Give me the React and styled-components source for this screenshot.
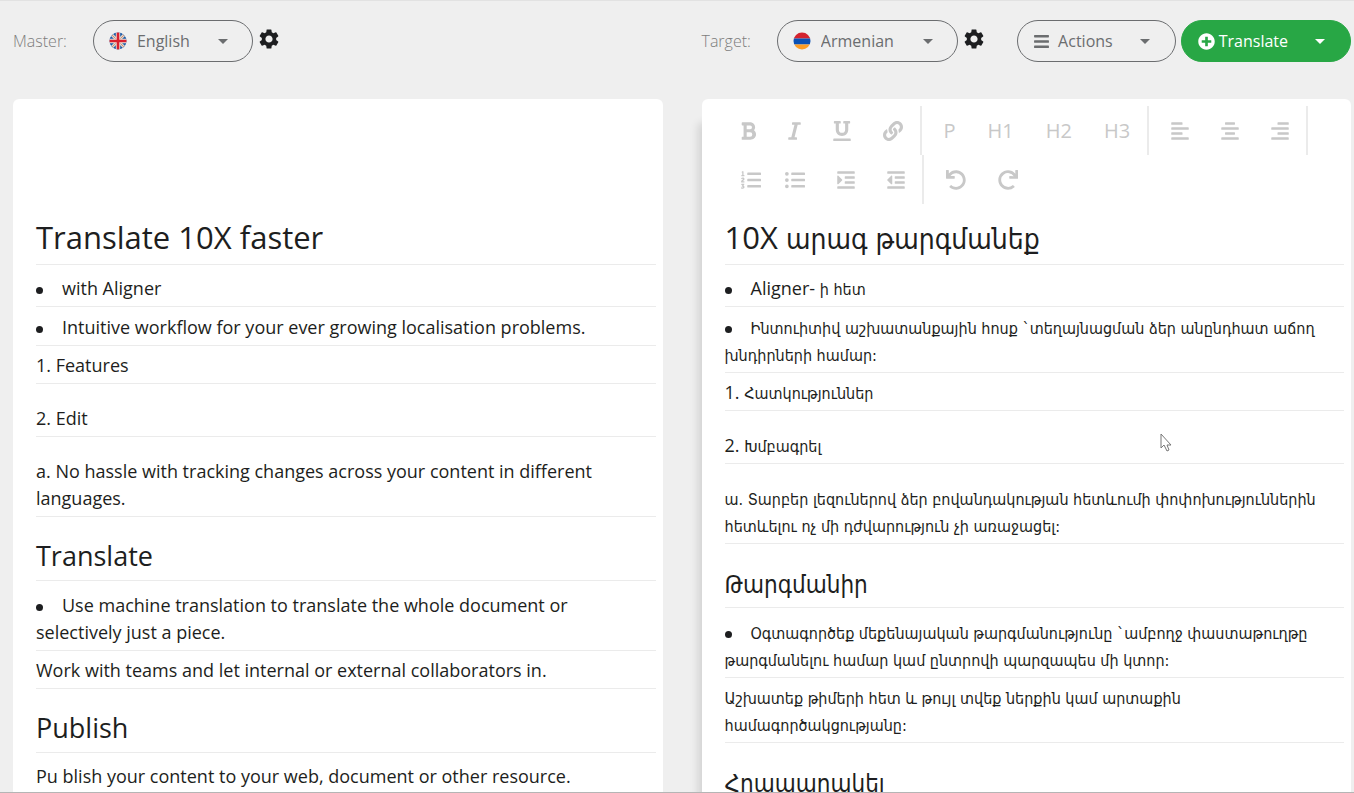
import React from 'react';
import styled, { createGlobalStyle } from 'styled-components';
import {
  FaBold, FaItalic, FaUnderline, FaLink, FaAlignLeft, FaAlignCenter, FaAlignRight,
  FaListOl, FaListUl, FaIndent, FaOutdent, FaUndo, FaRedo, FaBars, FaPlusCircle,
} from 'react-icons/fa';
import { MdSettings } from 'react-icons/md';

const GlobalStyle = createGlobalStyle`
  * { box-sizing: border-box; }
  body {
    margin: 0;
    background: #efefef;
    color: #1d1e20;
    font-family: 'Open Sans', 'DejaVu Sans Condensed', 'DejaVu Sans', sans-serif;
    font-size: 18px;
    line-height: 27px;
  }
`;

const Page = styled.div`
  height: 100vh;
  display: flex;
  flex-direction: column;
  overflow: hidden;
  border-top: 1px solid #e2e2e2;
  border-bottom: 1px solid #b5b5b5;
`;

const Columns = styled.div`
  display: grid;
  grid-template-columns: minmax(0, 1fr) minmax(0, 1fr);
  column-gap: 39px;
  padding: 0 3px 0 13px;
`;

const TopBar = styled(Columns).attrs({ as: 'header' })`
  padding-top: 19px;
  padding-bottom: 37px;
`;

const Workspace = styled(Columns).attrs({ as: 'main' })`
  flex: 1;
  min-height: 0;
  grid-template-rows: minmax(0, 1fr);
`;

const Side = styled.div`
  display: flex;
  align-items: center;
`;

const FieldLabel = styled.label`
  margin-right: 26px;
  font-size: 16px;
  font-weight: 300;
  color: #7d7d7d;
`;

const Picker = styled.div`
  display: flex;
  align-items: center;
  height: 42px;
  padding: 0 24px 0 15px;
  border: 1px solid #6b6d6f;
  border-radius: 21px;
  color: #6b6d6f;
`;

const Select = styled.select`
  appearance: none;
  margin: 0 28px 0 10px;
  padding: 0;
  border: 0;
  background: transparent;
  color: inherit;
  font: inherit;
  font-size: 16px;
`;

const Caret = styled.span`
  border: 5px solid transparent;
  border-top-color: currentColor;
  border-bottom: 0;
`;

const Flag = styled.svg`
  width: 18px;
  height: 18px;
`;

const GearButton = styled.button`
  display: flex;
  margin: 0 0 4px 4px;
  padding: 0;
  border: 0;
  background: none;
  color: #1d1e20;
  font-size: 24px;
`;

const Spacer = styled.div`
  flex: 1;
`;

const MenuButton = styled.button`
  display: flex;
  align-items: center;
  gap: ${(p) => (p.$primary ? 4 : 8)}px;
  height: 42px;
  margin-left: ${(p) => (p.$primary ? 5 : 0)}px;
  padding: 0 25px 0 ${(p) => (p.$primary ? 16 : 15)}px;
  border: 1px solid ${(p) => (p.$primary ? '#28a745' : '#6b6d6f')};
  border-radius: 21px;
  background: ${(p) => (p.$primary ? '#28a745' : 'transparent')};
  color: ${(p) => (p.$primary ? '#fff' : '#6b6d6f')};
  font: inherit;
  font-size: 16px;

  svg {
    width: 17px;
    height: 17px;
  }

  ${Caret} {
    margin-left: ${(p) => (p.$primary ? 23 : 19)}px;
  }
`;

const Panel = styled.section`
  padding: 7px 7px 0 23px;
  overflow-y: auto;
  scrollbar-width: none;
  border-radius: 6px 6px 0 0;
  background: #fff;
  box-shadow: ${(p) => (p.$raised ? '-6px 22px 8px -2px rgba(0, 0, 0, 0.12)' : 'none')};
`;

const Toolbar = styled.div`
  display: flex;
  flex-wrap: wrap;
  min-height: 98px;
`;

const ToolGroup = styled.div`
  display: flex;
  height: 49px;
  padding-right: 1px;
  padding-left: ${(p) => (p.$inset ? 6 : 0)}px;
  border-right: ${(p) => (p.$last ? 0 : 2)}px solid #ebebeb;
`;

const Tool = styled.button`
  display: flex;
  align-items: center;
  padding: 0 ${(p) => (p.$tight ? 8 : 16)}px 0 16px;
  border: 0;
  background: none;
  color: #c8c8c8;
  font: inherit;
  font-size: 20px;

  svg {
    width: ${(p) => p.$glyph}px;
    height: 20px;
  }
`;

const Title = styled.h1`
  margin: 0 0 3px;
  padding: 13px 0 7px;
  border-bottom: 1px solid #ebebeb;
  font-size: 31px;
  font-weight: 400;
  line-height: 40px;
`;

const Heading = styled.h2`
  margin: 0 0 4px;
  padding: 19px 0 5px;
  border-bottom: 1px solid #ebebeb;
  font-size: 27px;
  font-weight: 400;
  line-height: 39px;
`;

const Paragraph = styled.p`
  margin: ${(p) => (p.$spaced ? 15 : 0)}px 0 0;
  padding: 6px 0 4px;
  border-bottom: 1px solid #ebebeb;
`;

const Bullets = styled.ul`
  margin: 0;
  padding: 0;
  list-style: none;
`;

const Item = styled.li`
  padding: 7px 0 4px;
  border-bottom: 1px solid #ebebeb;

  &::before {
    content: '';
    display: inline-block;
    width: 7px;
    height: 7px;
    margin-right: 19px;
    border-radius: 50%;
    background: currentColor;
    vertical-align: middle;
  }
`;

const Armenian = styled.span.attrs({ lang: 'hy' })`
  font-family: 'DejaVu Sans Condensed', 'DejaVu Sans', sans-serif;
  font-size: ${(p) => p.$size || 16}px;
  line-height: 1;
`;

const Pointer = styled.svg`
  position: absolute;
  top: 432px;
  left: 1158px;
  width: 15px;
  height: 23px;
  pointer-events: none;
`;

function BritishFlag() {
  return (
    <Flag viewBox="0 0 18 18" aria-hidden="true">
      <clipPath id="gb"><circle cx="9" cy="9" r="8.5" /></clipPath>
      <g clipPath="url(#gb)">
        <path fill="#1c5aa8" d="M0 0h18v18H0z" />
        <path stroke="#e3d8c4" strokeWidth="3" d="M1 1l16 16M17 1L1 17" />
        <path stroke="#cf8a80" strokeWidth="1" d="M1 1l16 16M17 1L1 17" />
        <path stroke="#e9e2d8" strokeWidth="4.4" d="M9 0v18M0 9h18" />
        <path stroke="#d9202e" strokeWidth="2.6" d="M9 0v18M0 9h18" />
      </g>
    </Flag>
  );
}

function ArmenianFlag() {
  return (
    <Flag viewBox="0 0 18 18" aria-hidden="true">
      <clipPath id="am"><circle cx="9" cy="9" r="8.5" /></clipPath>
      <g clipPath="url(#am)">
        <path fill="#d3232f" d="M0 0h18v6.5H0z" />
        <path fill="#0b51b4" d="M0 6.5h18v6H0z" />
        <path fill="#fd9d25" d="M0 12.5h18V18H0z" />
      </g>
    </Flag>
  );
}

function LanguagePicker({ id, language, flag }) {
  return (
    <>
      <Picker>
        {flag}
        <Select id={id}><option>{language}</option></Select>
        <Caret />
      </Picker>
      <GearButton type="button" aria-label={`${language} settings`}><MdSettings /></GearButton>
    </>
  );
}

function IconTool({ label, icon: Icon, glyph = 20, tight }) {
  return <Tool type="button" aria-label={label} $glyph={glyph} $tight={tight}><Icon /></Tool>;
}

export default function App() {
  return (
    <Page>
      <GlobalStyle />
      <TopBar>
        <Side>
          <FieldLabel htmlFor="master">Master:</FieldLabel>
          <LanguagePicker id="master" language="English" flag={<BritishFlag />} />
        </Side>
        <Side>
          <FieldLabel htmlFor="target">Target:</FieldLabel>
          <LanguagePicker id="target" language="Armenian" flag={<ArmenianFlag />} />
          <Spacer />
          <MenuButton type="button" aria-haspopup="menu"><FaBars />Actions<Caret /></MenuButton>
          <MenuButton type="button" aria-haspopup="menu" $primary><FaPlusCircle />Translate<Caret /></MenuButton>
        </Side>
      </TopBar>
      <Workspace>
        <Panel>
          <Toolbar />
          <Title>Translate 10X faster</Title>
          <Bullets>
            <Item>with Aligner</Item>
            <Item>Intuitive workflow for your ever growing localisation problems.</Item>
          </Bullets>
          <Paragraph>1. Features</Paragraph>
          <Paragraph $spaced>2. Edit</Paragraph>
          <Paragraph $spaced>a. No hassle with tracking changes across your content in different languages.</Paragraph>
          <Heading>Translate</Heading>
          <Bullets>
            <Item>Use machine translation to translate the whole document or selectively just a piece.</Item>
          </Bullets>
          <Paragraph>Work with teams and let internal or external collaborators in.</Paragraph>
          <Heading>Publish</Heading>
          <Paragraph>Pu blish your content to your web, document or other resource.</Paragraph>
        </Panel>
        <Panel $raised>
          <Toolbar role="toolbar" aria-label="Formatting">
            <ToolGroup>
              <IconTool label="Bold" icon={FaBold} glyph={15} />
              <IconTool label="Italic" icon={FaItalic} glyph={13} />
              <IconTool label="Underline" icon={FaUnderline} glyph={18} />
              <IconTool label="Link" icon={FaLink} />
            </ToolGroup>
            <ToolGroup $inset>
              <Tool type="button">P</Tool>
              <Tool type="button">H1</Tool>
              <Tool type="button">H2</Tool>
              <Tool type="button">H3</Tool>
            </ToolGroup>
            <ToolGroup $inset>
              <IconTool label="Align left" icon={FaAlignLeft} glyph={18} />
              <IconTool label="Align center" icon={FaAlignCenter} glyph={18} />
              <IconTool label="Align right" icon={FaAlignRight} glyph={18} />
            </ToolGroup>
            <ToolGroup>
              <IconTool label="Numbered list" icon={FaListOl} tight />
              <IconTool label="Bulleted list" icon={FaListUl} />
              <IconTool label="Indent" icon={FaIndent} glyph={18} />
              <IconTool label="Outdent" icon={FaOutdent} glyph={18} />
            </ToolGroup>
            <ToolGroup $inset $last>
              <IconTool label="Undo" icon={FaUndo} />
              <IconTool label="Redo" icon={FaRedo} />
            </ToolGroup>
          </Toolbar>
          <Title>10X <Armenian $size={28}>արագ թարգմանեք</Armenian></Title>
          <Bullets>
            <Item>Aligner- <Armenian>ի հետ</Armenian></Item>
            <Item><Armenian>Ինտուիտիվ աշխատանքային հոսք `տեղայնացման ձեր անընդհատ աճող խնդիրների համար:</Armenian></Item>
          </Bullets>
          <Paragraph>1. <Armenian>Հատկություններ</Armenian></Paragraph>
          <Paragraph $spaced>2. <Armenian>Խմբագրել</Armenian></Paragraph>
          <Paragraph $spaced><Armenian>ա. Տարբեր լեզուներով ձեր բովանդակության հետևումի փոփոխություններին հետևելու ոչ մի դժվարություն չի առաջացել:</Armenian></Paragraph>
          <Heading><Armenian $size={24}>Թարգմանիր</Armenian></Heading>
          <Bullets>
            <Item><Armenian>Օգտագործեք մեքենայական թարգմանությունը `ամբողջ փաստաթուղթը թարգմանելու համար կամ ընտրովի պարզապես մի կտոր:</Armenian></Item>
          </Bullets>
          <Paragraph><Armenian>Աշխատեք թիմերի հետ և թույլ տվեք ներքին կամ արտաքին համագործակցությանը:</Armenian></Paragraph>
          <Heading><Armenian $size={24}>Հրապարակել</Armenian></Heading>
        </Panel>
      </Workspace>
      <Pointer viewBox="0 0 15 23" aria-hidden="true">
        <path d="M3 2v14l3-3 3 6 2-1-2-5h4z" fill="#fff" stroke="#777" strokeWidth="1" strokeLinejoin="round" />
      </Pointer>
    </Page>
  );
}
